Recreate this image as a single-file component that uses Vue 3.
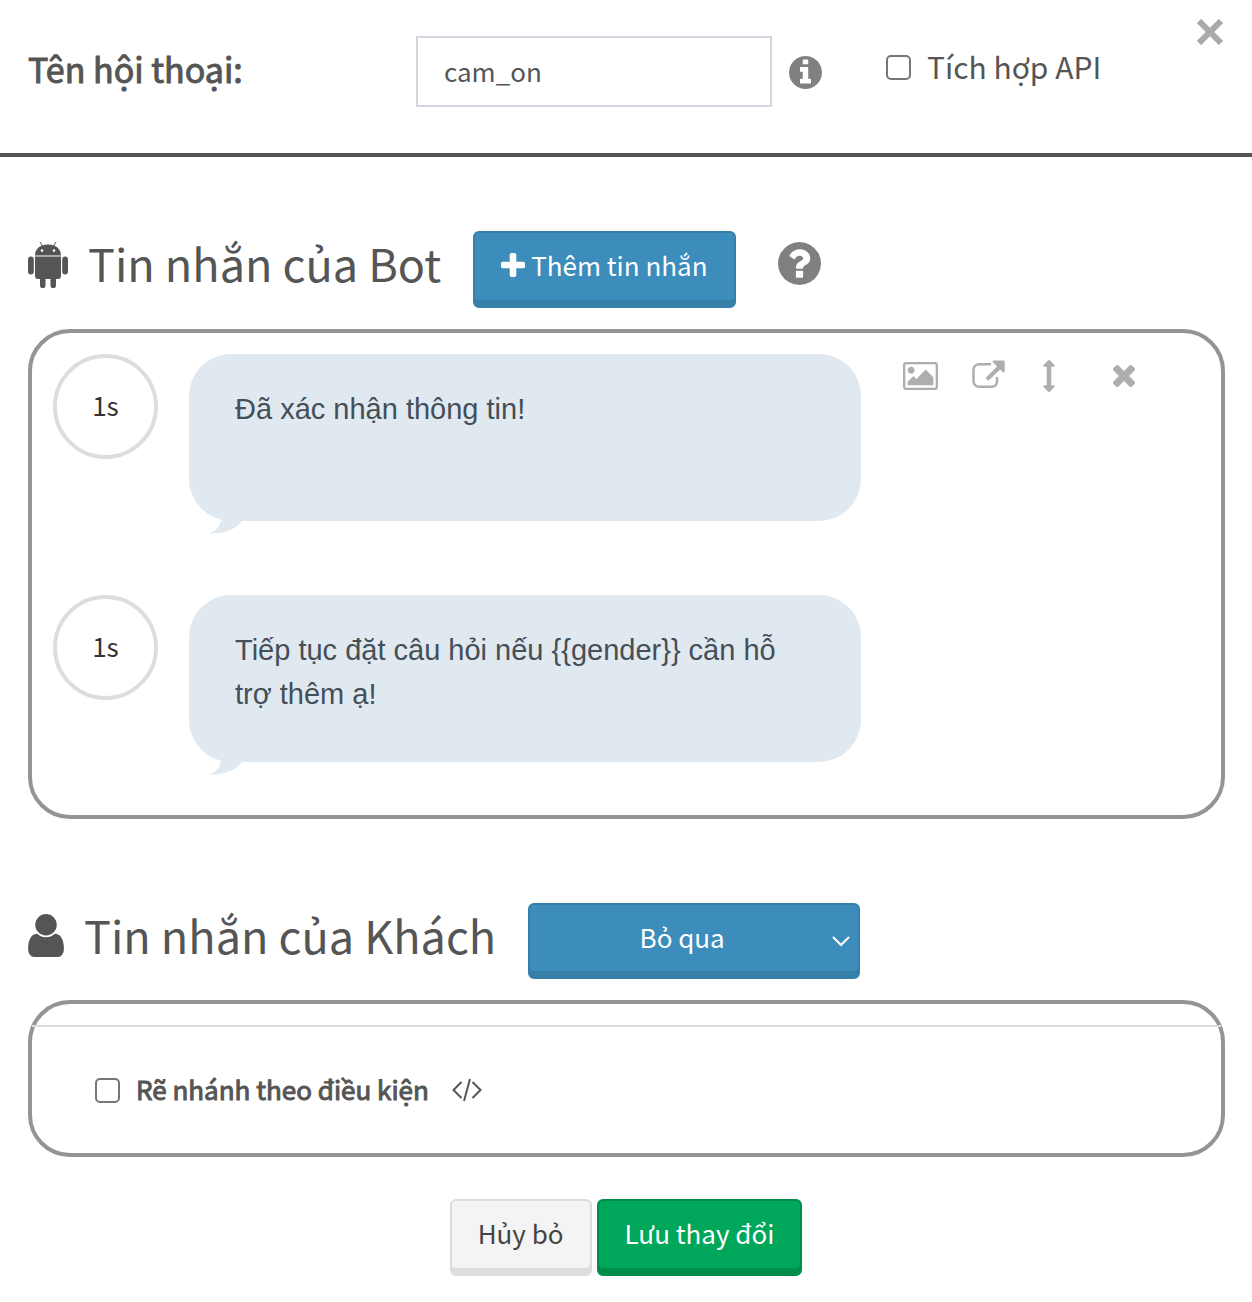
<template>
  <form class="dialog" @submit.prevent>
    <header class="dialog-header">
      <label class="name-label" for="dialog-name">Tên hội thoại:</label>
      <input id="dialog-name" v-model="name" class="name-input" type="text" />
      <div class="header-extra">
        <svg class="info-icon" viewBox="128 128 1536 1536">
          <path
            d="M1152 1376v-160q0-14-9-23t-23-9h-96v-512q0-14-9-23t-23-9h-320q-14 0-23 9t-9 23v160q0 14 9 23t23 9h96v320h-96q-14 0-23 9t-9 23v160q0 14 9 23t23 9h448q14 0 23-9t9-23zm-128-896v-160q0-14-9-23t-23-9h-192q-14 0-23 9t-9 23v160q0 14 9 23t23 9h192q14 0 23-9t9-23zm640 416q0 209-103 385.5t-279.5 279.5-385.5 103-385.5-103-279.5-279.5-103-385.5 103-385.5 279.5-279.5 385.5-103 385.5 103 279.5 279.5 103 385.5z"
          />
        </svg>
        <label class="check api-check">
          <input v-model="useApi" type="checkbox" />
          <span>Tích hợp API</span>
        </label>
      </div>
      <button class="close" type="button" aria-label="Đóng">
        <svg viewBox="0 0 26 26">
          <path d="M2 2 24 24M24 2 2 24" />
        </svg>
      </button>
    </header>

    <main class="dialog-body">
      <section class="block">
        <div class="block-title">
          <svg class="android-icon" viewBox="0 0 40 46">
            <path d="M12 0l3 5M28 0l-3 5" class="antenna" />
            <path
              fill-rule="evenodd"
              d="M7 13.500C7 7 12 2.500 20 2.500S33 7 33 13.500zM14 7.300a1.300 1.300 0 1 0 0 2.600 1.300 1.300 0 0 0 0-2.600zM26 7.300a1.300 1.300 0 1 0 0 2.600 1.300 1.300 0 0 0 0-2.600z"
            />
            <path
              d="M7 14.500h26v19.500a3 3 0 0 1-3 3h-2v6.500a2.500 2.500 0 0 1-5.500 0V37h-5v6.500a2.500 2.500 0 0 1-5.500 0V37h-2a3 3 0 0 1-3-3z"
            />
            <rect x="0" y="14.500" width="5.800" height="18" rx="2.900" />
            <rect x="34.200" y="14.500" width="5.800" height="18" rx="2.900" />
          </svg>
          <h2>Tin nhắn của Bot</h2>
          <button class="btn primary" type="button" @click="addMessage">
            <svg class="plus-icon" viewBox="192 128 1408 1408">
              <path
                d="M1600 736v192q0 40-28 68t-68 28h-416v416q0 40-28 68t-68 28h-192q-40 0-68-28t-28-68v-416h-416q-40 0-68-28t-28-68v-192q0-40 28-68t68-28h416v-416q0-40 28-68t68-28h192q40 0 68 28t28 68v416h416q40 0 68 28t28 68z"
              />
            </svg>
            Thêm tin nhắn
          </button>
          <svg class="help-icon" viewBox="128 128 1536 1536">
            <path
              d="M1024 1376v-192q0-14-9-23t-23-9h-192q-14 0-23 9t-9 23v192q0 14 9 23t23 9h192q14 0 23-9t9-23zm256-672q0-88-55.500-163t-138.500-116-170-41q-243 0-371 213-15 24 8 42l132 100q7 6 19 6 16 0 25-12 53-68 86-92 34-24 86-24 48 0 85.500 26t37.500 59q0 38-20 61t-68 45q-63 28-115.500 86.500t-52.500 125.500v36q0 14 9 23t23 9h192q14 0 23-9t9-23q0-19 21.500-49.500t54.500-49.500q32-18 49-28.500t46-35 44.500-48 28-60.500 12.500-81zm384 192q0 209-103 385.500t-279.500 279.500-385.500 103-385.500-103-279.500-279.500-103-385.500 103-385.500 279.500-279.500 385.500-103 385.500 103 279.500 279.500 103 385.500z"
            />
          </svg>
        </div>

        <div class="panel messages">
          <div v-for="(message, index) in messages" :key="message.id" class="message">
            <button class="delay" type="button">{{ message.delay }}s</button>
            <div class="bubble">
              <textarea v-model="message.text" rows="2" aria-label="Tin nhắn"></textarea>
              <svg class="tail" viewBox="0 0 36 20">
                <path d="M14 0C14 11 8 18 0 19.500 14 20 28 16 34 7V0z" />
              </svg>
            </div>
            <div v-if="index === activeIndex" class="tools">
              <button class="tool" type="button" aria-label="Hình ảnh">
                <svg width="35" height="28" viewBox="-64 128 1920 1536">
                  <path
                    d="M576 576q0 80-56 136t-136 56-136-56-56-136 56-136 136-56 136 56 56 136zm1024 384v448h-1408v-192l320-320 160 160 512-512zm96-704h-1600q-13 0-22.500 9.500t-9.500 22.500v1216q0 13 9.500 22.500t22.500 9.500h1600q13 0 22.500-9.500t9.500-22.500v-1216q0-13-9.500-22.500t-22.500-9.500zm160 32v1216q0 66-47 113t-113 47h-1600q-66 0-113-47t-47-113v-1216q0-66 47-113t113-47h1600q66 0 113 47t47 113z"
                  />
                </svg>
              </button>
              <button class="tool link" type="button" aria-label="Liên kết">
                <svg width="33" height="32" viewBox="0 0 33 32">
                  <path
                    class="outline"
                    d="M19 4.300H7A5.500 5.500 0 0 0 1.500 9.800v11.500A5.500 5.500 0 0 0 7 26.800h13a5 5 0 0 0 5-5V17"
                  />
                  <path
                    d="M21.500.500h10q1.200 0 1.200 1.200v10c0 1-1 1.200-1.700.500l-2.800-2.800-12 11.300-2.700-2.700L25 6.500l-3.700-3.700c-1-1-.8-2.300.2-2.300z"
                  />
                </svg>
              </button>
              <button class="tool move" type="button" aria-label="Di chuyển">
                <svg width="12" height="32" viewBox="480 0 640 1792">
                  <path
                    d="M1120 320q0 26-19 45t-45 19h-128v1024h128q26 0 45 19t19 45-19 45l-256 256q-19 19-45 19t-45-19l-256-256q-19-19-19-45t19-45 45-19h128v-1024h-128q-26 0-45-19t-19-45 19-45l256-256q19-19 45-19t45 19l256 256q19 19 19 45z"
                  />
                </svg>
              </button>
              <button class="tool remove" type="button" aria-label="Xóa">
                <svg width="22" height="22" viewBox="302 366 1188 1188">
                  <path
                    d="M1490 1322q0 40-28 68l-136 136q-28 28-68 28t-68-28l-294-294-294 294q-28 28-68 28t-68-28l-136-136q-28-28-28-68t28-68l294-294-294-294q-28-28-28-68t28-68l136-136q28-28 68-28t68 28l294 294 294-294q28-28 68-28t68 28l136 136q28 28 28 68t-28 68l-294 294 294 294q28 28 28 68z"
                  />
                </svg>
              </button>
            </div>
          </div>
        </div>
      </section>

      <section class="block">
        <div class="block-title">
          <svg class="user-icon" viewBox="256 128 1280 1536">
            <path
              d="M1536 1399q0 109-62.500 187t-150.500 78h-854q-88 0-150.500-78t-62.500-187q0-85 8.500-160.500t31.500-152 58.500-131 94-89 134.500-34.500q131 128 313 128t313-128q76 0 134.500 34.500t94 89 58.500 131 31.500 152 8.500 160.500zm-256-887q0 159-112.500 271.500t-271.500 112.500-271.500-112.500-112.500-271.500 112.500-271.500 271.500-112.500 271.500 112.500 112.500 271.500z"
            />
          </svg>
          <h2>Tin nhắn của Khách</h2>
          <div class="select-wrap">
            <select v-model="reply" class="btn primary" aria-label="Tin nhắn của Khách">
              <option value="skip">Bỏ qua</option>
            </select>
            <svg class="chevron" viewBox="0 0 18 11">
              <path d="M1 1l8 8 8-8" />
            </svg>
          </div>
        </div>

        <div class="panel guest">
          <hr />
          <div class="branch">
            <label class="check branch-check">
              <input v-model="branching" type="checkbox" />
              <span>Rẽ nhánh theo điều kiện</span>
            </label>
            <svg class="code-icon" viewBox="0 0 30 24">
              <path d="M9.500 4L1.500 12l8 8M20.500 4l8 8-8 8M18 1l-6 22" />
            </svg>
          </div>
        </div>
      </section>
    </main>

    <footer class="dialog-footer">
      <button class="btn default" type="button">Hủy bỏ</button>
      <button class="btn success" type="submit">Lưu thay đổi</button>
    </footer>
  </form>
</template>

<script setup>
import { ref } from 'vue';

const name = ref('cam_on');
const useApi = ref(false);
const branching = ref(false);
const reply = ref('skip');
const activeIndex = ref(0);

const messages = ref([
  { id: 1, delay: 1, text: 'Đã xác nhận thông tin!' },
  { id: 2, delay: 1, text: 'Tiếp tục đặt câu hỏi nếu {{gender}} cần hỗ trợ thêm ạ!' },
]);

function addMessage() {
  messages.value.push({ id: messages.value.length + 1, delay: 1, text: '' });
}
</script>

<style>
body {
  margin: 0;
  background: #fff;
}
</style>

<style scoped>
.dialog,
.dialog button,
.dialog input,
.dialog select {
  font-family: 'Source Sans Pro', 'Noto Sans CJK JP', 'Noto Sans', sans-serif;
}
.dialog {
  color: #555;
  font-size: 26px;
  line-height: 40px;
}
.dialog *,
.dialog *::before {
  box-sizing: border-box;
}
svg {
  display: block;
  flex: none;
  fill: currentColor;
}
button {
  margin: 0;
  cursor: pointer;
}

.dialog-header {
  position: relative;
  display: grid;
  grid-template-columns: 388px minmax(0, 356fr) minmax(0, 452fr);
  align-items: start;
  padding: 36px 28px 46px;
  border-bottom: 4px solid #555;
}
.name-label {
  font-size: 34px;
  line-height: 66px;
  -webkit-text-stroke: 1px currentColor;
}
.name-input {
  width: 100%;
  height: 71px;
  padding: 0 26px 2px;
  border: 2px solid #d2d6de;
  border-radius: 0;
  color: #555;
  font-size: 26px;
  outline: none;
}
.header-extra {
  display: flex;
  align-items: flex-start;
  gap: 64px;
  padding-left: 17px;
}
.info-icon {
  width: 33px;
  height: 33px;
  margin-top: 20px;
  color: #808080;
}
.check {
  display: flex;
  align-items: center;
  gap: 16px;
}
.check input {
  appearance: none;
  width: 25px;
  height: 25px;
  margin: 0;
  border: 2px solid #767676;
  border-radius: 5px;
  background: #fff;
}
.check input:checked {
  background: #3c8dbc;
}
.check span {
  padding-bottom: 2px;
}
.api-check {
  font-size: 30px;
  line-height: 60px;
}
.close {
  position: absolute;
  top: 19px;
  right: 29px;
  padding: 0;
  border: 0;
  background: none;
  color: #aaa;
}
.close svg {
  width: 26px;
  height: 26px;
  stroke: currentColor;
  stroke-width: 6;
}

.dialog-body {
  display: flex;
  flex-direction: column;
  gap: 84px;
  padding: 74px 27px 0 28px;
}
.block {
  display: flex;
  flex-direction: column;
  gap: 21px;
}
.block-title {
  display: flex;
  align-items: flex-start;
}
.block-title > svg {
  margin-top: 11px;
}
h2 {
  margin: 0 32px 0 20px;
  font-size: 45px;
  font-weight: 400;
  line-height: 63px;
}
.android-icon {
  width: 40px;
  height: 46px;
}
.antenna {
  fill: none;
  stroke: currentColor;
}
.user-icon {
  width: 36px;
  height: 43px;
}
.help-icon {
  width: 43px;
  height: 43px;
  margin-left: 42px;
  color: #808080;
}

.btn {
  display: flex;
  align-items: center;
  gap: 6px;
  height: 77px;
  padding: 0 26px 9px;
  border: 2px solid transparent;
  border-radius: 6px;
  font-size: 26px;
  line-height: 40px;
}
.btn.primary {
  border-color: #367fa9;
  background: #3c8dbc;
  box-shadow: inset 0 -6px 0 #367fa9;
  color: #fff;
}
.btn.default {
  border-color: #ddd;
  background: #f4f4f4;
  box-shadow: inset 0 -6px 0 #ddd;
  color: #444;
}
.btn.success {
  border-color: #008d4c;
  background: #00a65a;
  box-shadow: inset 0 -6px 0 #008d4c;
  color: #fff;
}
.plus-icon {
  width: 24px;
  height: 24px;
}
.select-wrap {
  position: relative;
  width: 332px;
}
.select-wrap select {
  appearance: none;
  width: 100%;
  height: 76px;
  padding: 0 50px 9px 26px;
  text-align: center;
  text-align-last: center;
}
.chevron {
  position: absolute;
  top: 33px;
  right: 10px;
  width: 18px;
  height: 11px;
  fill: none;
  stroke: #fff;
  stroke-width: 2;
  pointer-events: none;
}

.panel {
  border: 4px solid #949494;
  border-radius: 42px;
}
.messages {
  display: flex;
  flex-direction: column;
  gap: 74px;
  padding: 21px 21px 53px;
}
.message {
  display: flex;
  align-items: flex-start;
}
.delay {
  flex: none;
  width: 105px;
  height: 105px;
  margin-right: 31px;
  padding: 0 0 4px;
  border: 4px solid #ddd;
  border-radius: 50%;
  background: #fff;
  color: #333;
  font-size: 26px;
}
.bubble {
  position: relative;
  flex: 0 1 672px;
  padding: 33px 46px 46px;
  border-radius: 42px;
  background: #e0e8f0;
}
.bubble textarea {
  display: block;
  width: 100%;
  height: 88px;
  padding: 0;
  border: 0;
  background: none;
  color: #444f58;
  font-family: 'Liberation Sans', Arial, sans-serif;
  font-size: 29px;
  line-height: 44px;
  overflow: hidden;
  resize: none;
  outline: none;
}
.tail {
  position: absolute;
  bottom: -13px;
  left: 19px;
  width: 36px;
  height: 20px;
  fill: #e0e8f0;
}
.tools {
  display: flex;
  align-items: center;
  height: 44px;
  margin-left: 42px;
}
.tool {
  padding: 0;
  border: 0;
  background: none;
  color: #aeaeae;
}
.tool.link {
  margin-left: 34px;
}
.tool.move {
  margin-left: 38px;
}
.tool.remove {
  margin-left: 58px;
}
.outline {
  fill: none;
  stroke: currentColor;
  stroke-width: 2.5;
}

.guest hr {
  height: 2px;
  margin: 21px 0 0;
  border: 0;
  background: #ddd;
}
.branch {
  display: flex;
  align-items: center;
  gap: 22px;
  height: 126px;
  padding: 0 63px;
}
.branch-check {
  -webkit-text-stroke: 1px currentColor;
}
.code-icon {
  width: 32px;
  height: 24px;
  fill: none;
  stroke: currentColor;
  stroke-width: 2;
}

.dialog-footer {
  display: flex;
  justify-content: center;
  gap: 5px;
  padding: 42px 28px 26px;
}
</style>
